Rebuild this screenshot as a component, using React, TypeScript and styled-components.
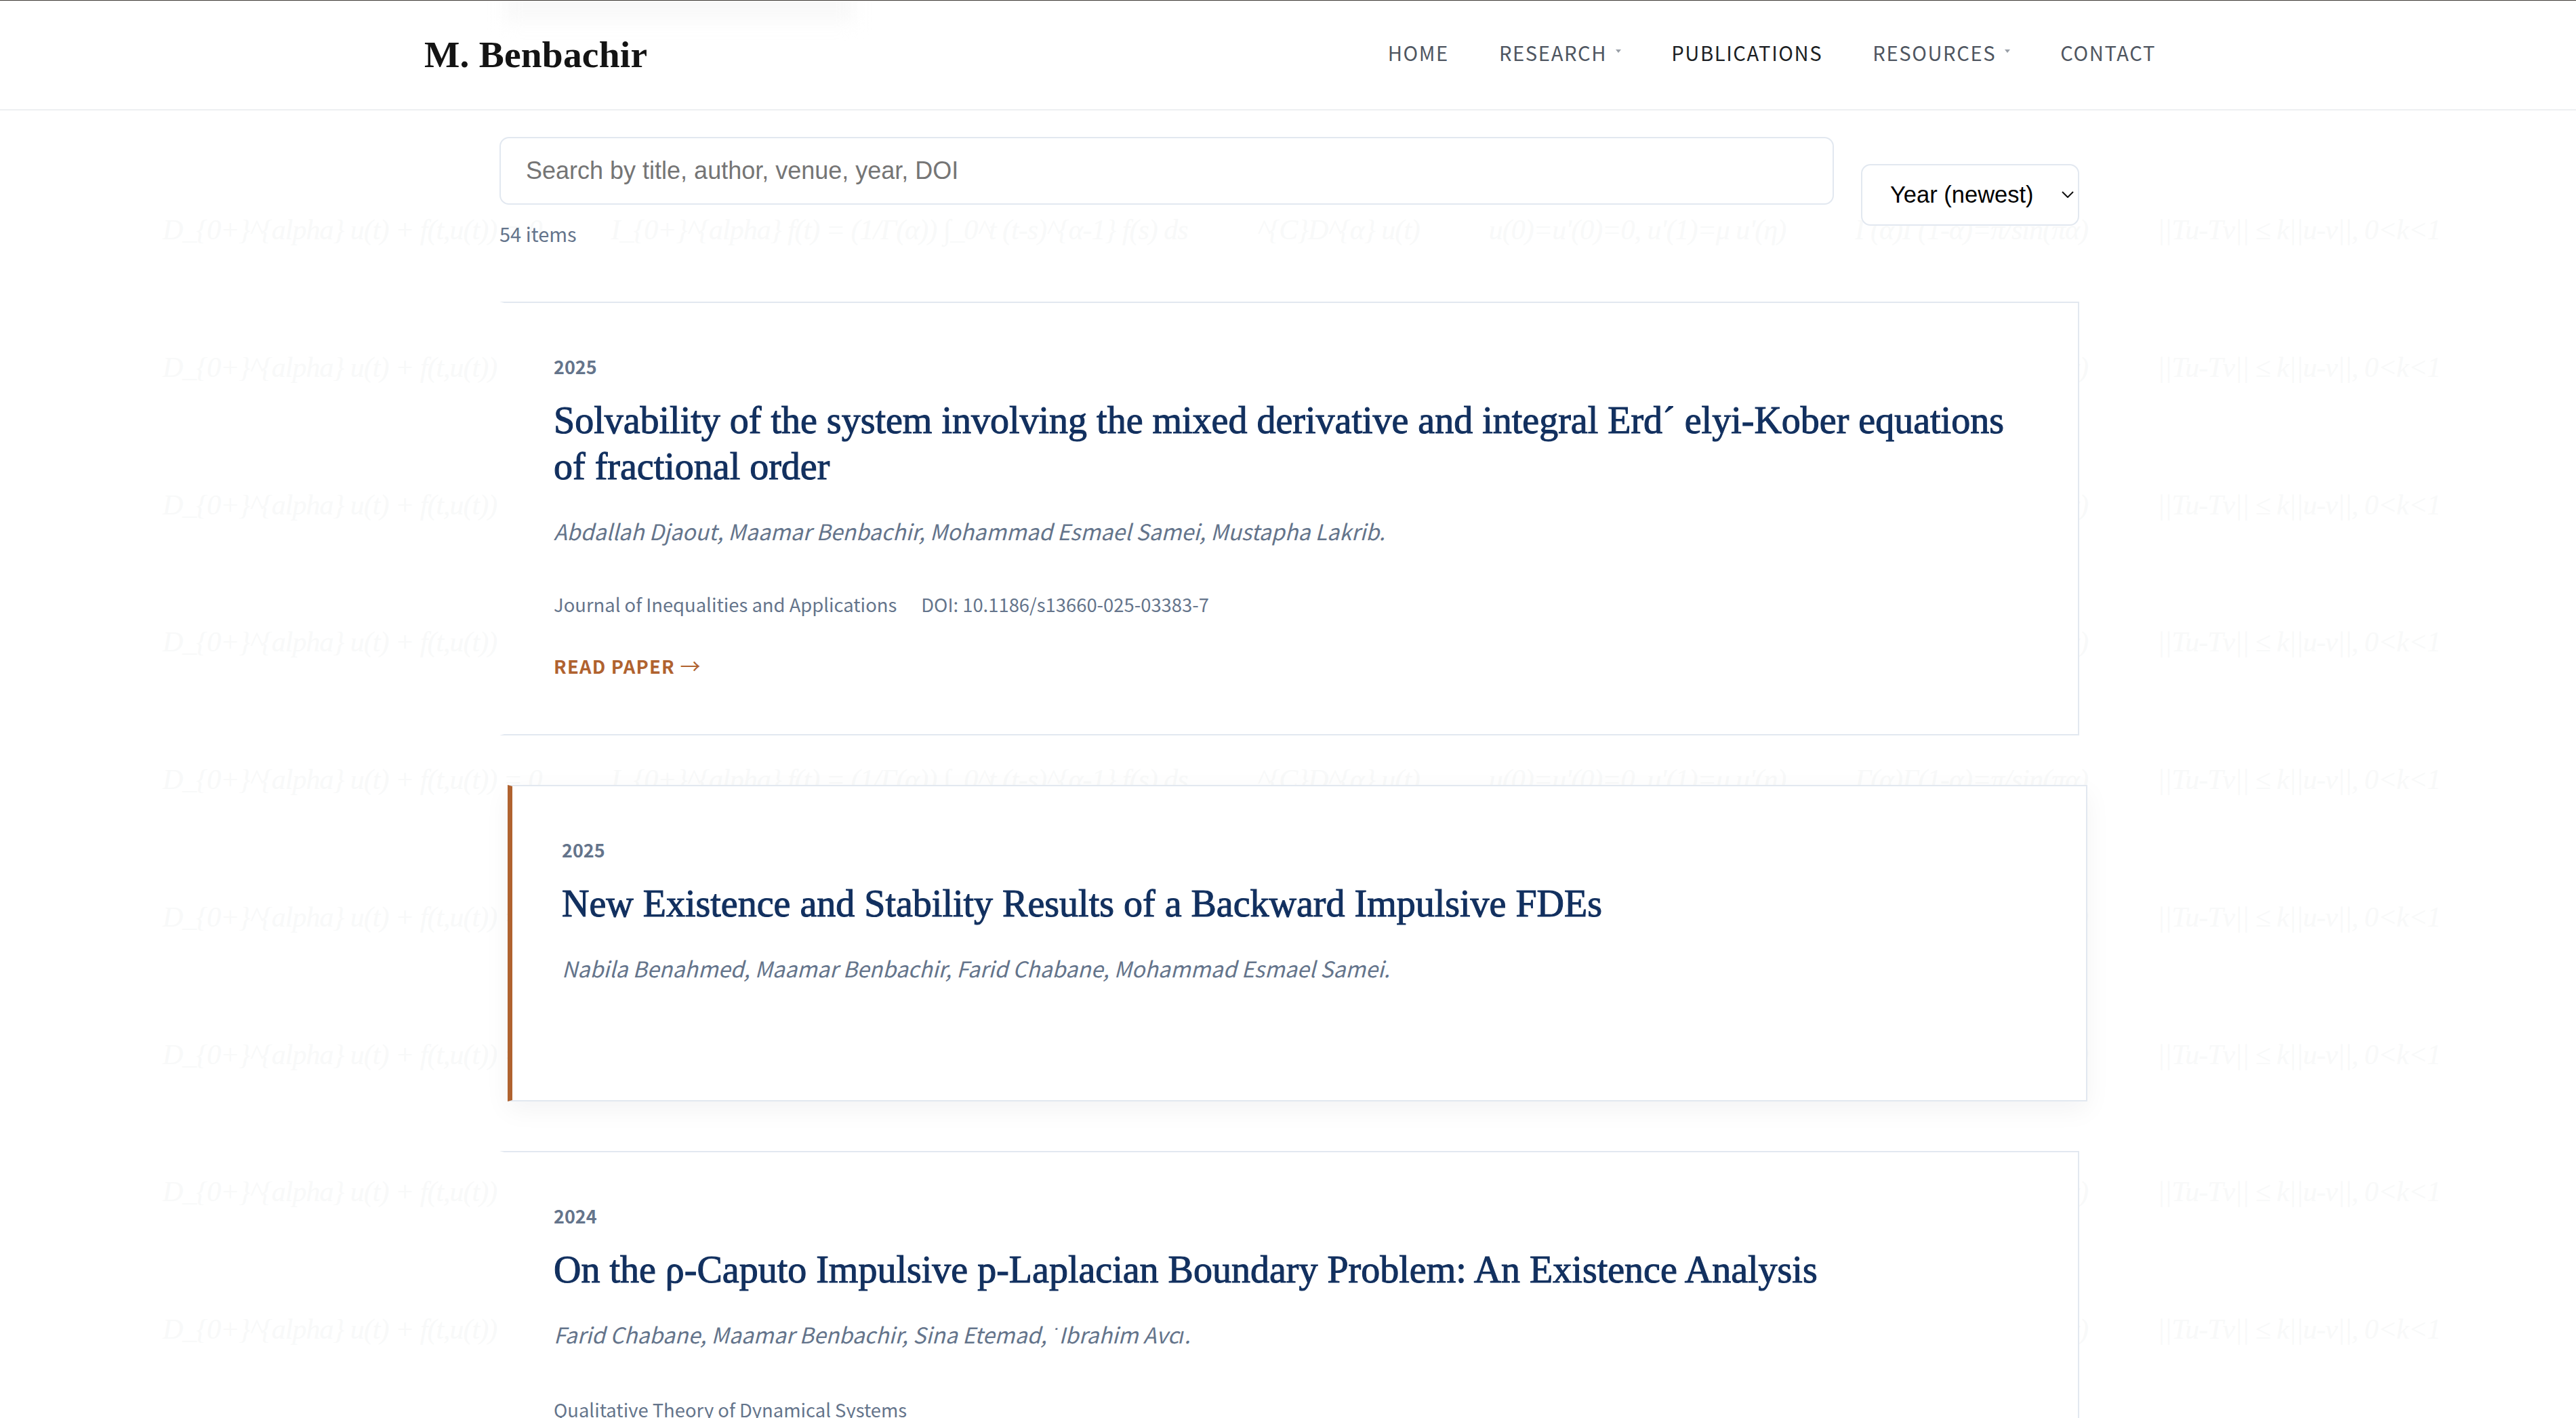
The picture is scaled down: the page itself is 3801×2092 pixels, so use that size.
import React from "react";
import styled, { createGlobalStyle } from "styled-components";

const GlobalStyle = createGlobalStyle`
  html, body {
    margin: 0;
    height: 100%;
    background: #fff;
  }
  * {
    box-sizing: border-box;
  }
`;

const SANS = `"Noto Sans CJK SC", "Noto Sans", sans-serif`;
const SERIF = `"Liberation Serif", serif`;

const Page = styled.div`
  position: relative;
  height: 100vh;
  overflow: hidden;
  font-family: ${SANS};
  border-top: 1px solid #3f3a36;
`;

/* faint equations tiled behind the page */
const Watermark = styled.div`
  position: absolute;
  inset: 0;
  padding-top: 313px;
  overflow: hidden;
`;

const FormulaRow = styled.div`
  display: flex;
  gap: 102px;
  height: 202.75px;
  padding-left: 240px;
  font-family: ${SERIF};
  font-style: italic;
  font-size: 42px;
  letter-spacing: -1px;
  line-height: 50px;
  color: #f8f9f9;
  white-space: nowrap;
`;

const Header = styled.header`
  position: relative;
  height: 162px;
  background: #fff;
  border-bottom: 2px solid #edf0f2;
  display: flex;
  justify-content: space-between;
  align-items: center;
  padding: 0 620px 0 626px;
`;

const GhostMenu = styled.div`
  position: absolute;
  top: -20px;
  left: 745px;
  width: 515px;
  height: 52px;
  background: #f9f9f9;
  filter: blur(12px);
`;

const Logo = styled.div`
  position: relative;
  padding-bottom: 2px;
  font-family: ${SERIF};
  font-weight: 700;
  font-size: 55.5px;
  letter-spacing: 0.2px;
  color: #141414;
`;

const Nav = styled.nav`
  position: relative;
  display: flex;
  align-items: center;
  gap: 74px;
  padding-bottom: 9px;
`;

const NavLink = styled.a<{ $active?: boolean; $caret?: boolean }>`
  position: relative;
  font-size: 29.2px;
  letter-spacing: 1.6px;
  line-height: 40px;
  color: ${(p) => (p.$active ? "#1c1f24" : "#4f5661")};
  ${(p) =>
    p.$caret &&
    `
    &::after {
      content: "";
      display: inline-block;
      margin-left: 13px;
      vertical-align: 12px;
      border-left: 4px solid transparent;
      border-right: 4px solid transparent;
      border-top: 5px solid #9aa0a8;
    }
  `}
`;

const Main = styled.main`
  position: relative;
  width: 2331px;
  margin-left: 737px;
`;

const Controls = styled.div`
  display: flex;
  align-items: center;
  gap: 40px;
  padding-top: 39px;
`;

const SearchColumn = styled.div`
  flex: 1;
  display: flex;
  flex-direction: column;
`;

const SearchInput = styled.input`
  height: 100px;
  padding: 0 37px;
  border: 2px solid #e2e8f0;
  border-radius: 14px;
  background: #fff;
  font-family: "Liberation Sans", sans-serif;
  font-size: 36px;
  outline: none;

  &::placeholder {
    color: #757575;
    opacity: 1;
  }
`;

const ItemCount = styled.div`
  margin-top: 19px;
  padding-bottom: 5px;
  font-size: 29px;
  line-height: 46px;
  color: #64748b;
`;

const SelectWrap = styled.div`
  position: relative;
  width: 322px;
`;

const SortSelect = styled.select`
  display: block;
  width: 100%;
  height: 91px;
  padding: 0 41px;
  border: 2px solid #e2e8f0;
  border-radius: 14px;
  background: #fff;
  color: #000;
  font-family: "Liberation Sans", sans-serif;
  font-size: 34.5px;
  appearance: none;
`;

const Chevron = styled.svg`
  position: absolute;
  top: 40px;
  right: 8px;
  width: 18px;
  height: 10px;
  pointer-events: none;
`;

const CardList = styled.div`
  display: flex;
  flex-direction: column;
  gap: 73px;
  margin-top: 73px;
`;

const Card = styled.article<{ $active?: boolean; $short?: boolean }>`
  background: #fff;
  border: 2px solid #e2e8f0;
  border-left: 7px solid ${(p) => (p.$active ? "#b0622f" : "transparent")};
  padding: 74px 73px ${(p) => (p.$short ? "170px" : "76px")};
  ${(p) =>
    p.$active &&
    `
    transform: translateX(12px);
    box-shadow: 0 12px 36px rgba(15, 23, 42, 0.05);
  `}
`;

const Year = styled.div`
  font-size: 27px;
  font-weight: 700;
  line-height: 40px;
  color: #64748b;
`;

const Title = styled.h3`
  margin: 25px 0 0;
  font-family: ${SERIF};
  font-size: 56px;
  font-weight: 400;
  -webkit-text-stroke: 1.1px #12305f;
  line-height: 68px;
  color: #12305f;
`;

const Authors = styled.p`
  margin: 36px 0 0;
  font-size: 32.2px;
  font-style: italic;
  line-height: 50px;
  color: #64748b;
`;

const Dot = styled.span`
  font-family: "Liberation Sans", sans-serif;
`;

const Meta = styled.div`
  display: flex;
  gap: 36px;
  margin-top: 58px;
  font-size: 27.4px;
  line-height: 50px;
  color: #64748b;
`;

const ReadLink = styled.a`
  display: block;
  margin-top: 40px;
  font-size: 27.4px;
  font-weight: 700;
  line-height: 50px;
  letter-spacing: 1.2px;
  color: #b0622f;
`;

const Arrow = styled.span`
  font-weight: 400;
  font-size: 30px;
  letter-spacing: 0;
`;

const formulas = [
  "D_{0+}^{alpha} u(t) + f(t,u(t)) = 0",
  "I_{0+}^{alpha} f(t) = (1/Γ(α)) ∫_0^t (t-s)^{α-1} f(s) ds",
  "^{C}D^{α} u(t)",
  "u(0)=u'(0)=0, u'(1)=μ u'(η)",
  "Γ(α)Γ(1-α)=π/sin(πα)",
  "||Tu-Tv|| ≤ k||u-v||, 0<k<1",
];

const App: React.FC = () => {
  return (
    <Page>
      <GlobalStyle />
      <Watermark>
        {Array.from({ length: 9 }, (_, row) => (
          <FormulaRow key={row}>
            {formulas.map((f) => (
              <span key={f}>{f}</span>
            ))}
          </FormulaRow>
        ))}
      </Watermark>

      <Header>
        <GhostMenu />
        <Logo>M. Benbachir</Logo>
        <Nav>
          <NavLink>HOME</NavLink>
          <NavLink $caret>RESEARCH</NavLink>
          <NavLink $active>PUBLICATIONS</NavLink>
          <NavLink $caret>RESOURCES</NavLink>
          <NavLink>CONTACT</NavLink>
        </Nav>
      </Header>

      <Main>
        <Controls>
          <SearchColumn>
            <SearchInput placeholder="Search by title, author, venue, year, DOI" />
            <ItemCount>54 items</ItemCount>
          </SearchColumn>
          <SelectWrap>
            <SortSelect defaultValue="newest">
              <option value="newest">Year (newest)</option>
              <option value="oldest">Year (oldest)</option>
            </SortSelect>
            <Chevron viewBox="0 0 18 10" fill="none" stroke="#111" strokeWidth="2">
              <path d="M1 1l8 8 8-8" />
            </Chevron>
          </SelectWrap>
        </Controls>

        <CardList>
          <Card>
            <Year>2025</Year>
            <Title>
              Solvability of the system involving the mixed derivative and integral Erd´ elyi-Kober
              equations of fractional order
            </Title>
            <Authors>Abdallah Djaout, Maamar Benbachir, Mohammad Esmael Samei, Mustapha Lakrib.</Authors>
            <Meta>
              <span>Journal of Inequalities and Applications</span>
              <span>DOI: 10.1186/s13660-025-03383-7</span>
            </Meta>
            <ReadLink>
              READ PAPER <Arrow>→</Arrow>
            </ReadLink>
          </Card>

          <Card $active $short>
            <Year>2025</Year>
            <Title>New Existence and Stability Results of a Backward Impulsive FDEs</Title>
            <Authors>Nabila Benahmed, Maamar Benbachir, Farid Chabane, Mohammad Esmael Samei.</Authors>
          </Card>

          <Card>
            <Year>2024</Year>
            <Title>On the ρ-Caputo Impulsive p-Laplacian Boundary Problem: An Existence Analysis</Title>
            <Authors>
              Farid Chabane, Maamar Benbachir, Sina Etemad, <Dot>˙</Dot>Ibrahim Avcı.
            </Authors>
            <Meta>
              <span>Qualitative Theory of Dynamical Systems</span>
            </Meta>
          </Card>
        </CardList>
      </Main>
    </Page>
  );
};

export default App;
